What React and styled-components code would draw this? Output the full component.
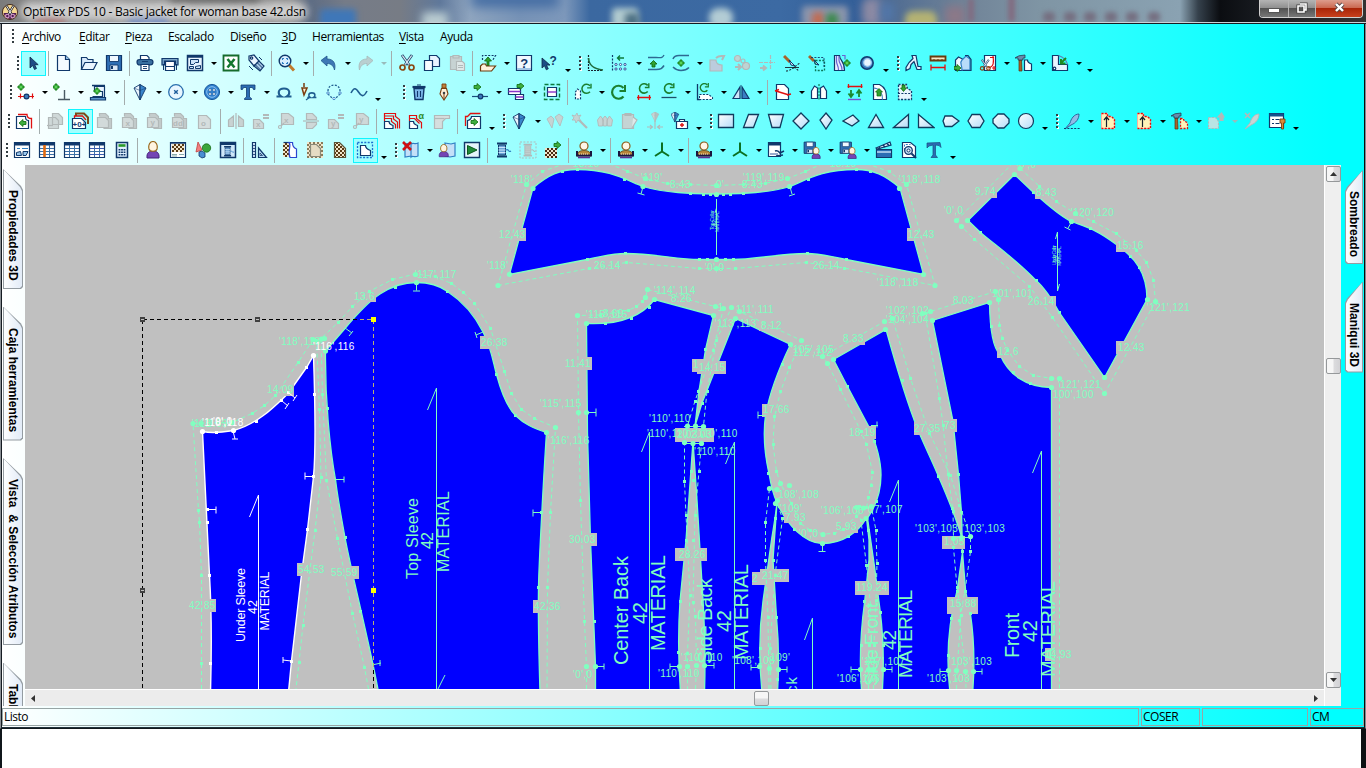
import React from 'react';
import styled, { createGlobalStyle, css } from 'styled-components';

const N = '#10386b';
const B = '#2f7fc4';
const L = '#d8eafc';
const R = '#e01010';
const GR = '#1f8a1f';
const G = '#b2b9b9';
const K = '#16202c';
const W = '#ffffff';
const BR = '#a8632a';
const M = '#80ffc0';

const Global = createGlobalStyle`
  * { box-sizing: border-box; }
  html, body { margin: 0; padding: 0; }
  body { width: 1366px; height: 768px; overflow: hidden; background: #fff; font-family: "Open Sans", "Noto Sans", sans-serif; }
`;

const Desktop = styled.div`
  width: 1366px;
  height: 768px;
  display: flex;
  flex-direction: column;
  background: #fff;
`;

/* ---------- title bar ---------- */
const TitleBar = styled.header`
  height: 24px;
  flex: none;
  display: flex;
  align-items: flex-start;
  position: relative;
  overflow: hidden;
  border-bottom: 1px solid #151b22;
  background: linear-gradient(90deg, #7b7b7b 0, #8f8f8f 60px, #8c8c8c 170px, #858585 290px, #5d6c84 310px, #767c88 345px, #777c85 400px, #5f789b 440px, #8fa5bf 470px, #7793b7 520px, #7d98bb 565px, #3b68a0 590px, #3c6aa3 780px, #345f98 860px, #4b6992 880px, #6f8297 960px, #7f95a4 1040px, #8aa2b2 1180px, #35414c 1198px, #0b0d11 1220px, #16191e 1255px, #333 1366px);
`;
const Blob = styled.i`
  position: absolute;
  left: ${p => p.$x}px;
  top: ${p => p.$y ?? 8}px;
  width: ${p => p.$w}px;
  height: ${p => p.$h ?? 20}px;
  background: ${p => p.$c};
  border-radius: ${p => p.$r ?? 4}px;
  filter: blur(${p => p.$b ?? 3}px);
`;
const TitleEdge = styled.i`
  position: absolute;
  left: 0;
  right: 0;
  top: 22px;
  height: 1px;
  background: #c9d2d8;
`;
const TitleText = styled.h1`
  position: relative;
  margin: 3px 0 0 5px;
  font-size: 12px;
  line-height: 17px;
  font-weight: 400;
  letter-spacing: -0.24px;
  color: #000;
  white-space: pre;
  text-shadow: 0 0 6px #e8e8e8, 0 0 8px #e0e0e0, 0 0 10px #ddd;
`;
const AppIcon = styled.span`
  position: relative;
  display: flex;
  margin: 4px 0 0 2px;
`;
const WindowButtons = styled.div`
  position: relative;
  display: flex;
  margin-left: auto;
  margin-right: 3px;
  height: 18px;
  border: 1px solid #d0d0d0;
  border-top: 0;
  border-radius: 0 0 4px 4px;
  overflow: hidden;
`;
const WindowButton = styled.button`
  width: ${p => p.$w}px;
  border: 0;
  padding: 0 0 2px;
  display: flex;
  align-items: center;
  justify-content: center;
  border-left: ${p => (p.$first ? 0 : '1px solid #b5b5b5')};
  background: ${p => (p.$close
    ? 'linear-gradient(#dd9d8d 0, #cb6a52 45%, #a92508 50%, #c8401c 100%)'
    : 'linear-gradient(#b4b4b4 0, #909090 45%, #535353 50%, #777 100%)')};
`;

/* ---------- frame ---------- */
const Frame = styled.div`
  height: 705px;
  flex: none;
  display: flex;
  flex-direction: column;
  border-left: 1px solid #8a8f94;
  border-right: 1px solid #7d8b90;
  border-bottom: 1px solid #10181c;
`;
const Body = styled.div`
  flex: 1;
  display: flex;
  flex-direction: column;
  border-left: 1px solid #151b22;
  border-right: 1px solid #0b0b0b;
  border-bottom: 1px solid #20303a;
  background: linear-gradient(90deg, #fff 0, #f2ffff 60px, #00ffff 1330px);
`;
const MenuBar = styled.nav`
  height: 25px;
  flex: none;
  display: flex;
  align-items: center;
  padding: 0 0 0 5px;
`;
const MenuItem = styled.span`
  width: ${p => p.$w}px;
  font-size: 12px;
  line-height: 16px;
  letter-spacing: -0.42px;
  color: #000;
  white-space: nowrap;
  u { text-underline-offset: 2px; }
`;
const Toolbars = styled.div`
  height: 116px;
  flex: none;
`;
const ToolRow = styled.div`
  height: 29px;
  display: flex;
  align-items: center;
  margin-left: ${p => p.$pad}px;
`;
const Grip = styled.i`
  width: 9px;
  height: 15px;
  margin-left: ${p => p.$gap || 0}px;
  flex: none;
  background: repeating-linear-gradient(#333d42 0 2px, transparent 2px 4px) 5px 0 / 2px 15px no-repeat,
    repeating-linear-gradient(#fff 0 2px, transparent 2px 4px) 6px 1px / 2px 15px no-repeat;
`;
const Tool = styled.button`
  width: 25px;
  height: 25px;
  flex: none;
  padding: 2px;
  display: flex;
  align-items: flex-start;
  justify-content: flex-start;
  background: transparent;
  border: 1px solid transparent;
  ${p => p.$on && css`background: #a2ffff; border-color: #0ff5ff;`}
`;
const Arrow = styled.i`
  width: 11px;
  height: 25px;
  flex: none;
  display: flex;
  align-items: center;
  justify-content: center;
  &::after {
    content: '';
    border: 3px solid transparent;
    border-bottom: 0;
    border-top-color: ${p => (p.$off ? '#9bb' : '#000')};
  }
`;
const Overflow = styled(Arrow)`
  width: 12px;
  padding-top: 14px;
`;
const Sep = styled.i`
  width: 1px;
  height: 25px;
  margin: 0 3px 0 2px;
  flex: none;
  background: #a4adad;
`;

/* ---------- workspace ---------- */
const Work = styled.main`
  height: 541px;
  flex: none;
  display: flex;
`;
const SideTabs = styled.aside`
  width: ${p => p.$w}px;
  flex: none;
  overflow: hidden;
  padding-top: ${p => p.$top}px;
  padding-left: ${p => p.$left}px;
  display: flex;
  flex-direction: column;
  gap: 17.5px;
`;
const SideTab = styled.div`
  width: ${p => (p.$right ? 18 : 20)}px;
  height: ${p => p.$h}px;
  flex: none;
  padding: 1px;
  background: #949ca2;
  --shape: ${p => (p.$right
    ? 'polygon(100% 0, 2px 17px, 0 21px, 0 calc(100% - 2px), 2px 100%, 100% 100%)'
    : 'polygon(0 0, calc(100% - 2px) 17px, 100% 21px, 100% calc(100% - 2px), calc(100% - 2px) 100%, 0 100%)')};
  clip-path: var(--shape);
`;
const SideTabFace = styled.div`
  width: 100%;
  height: 100%;
  overflow: hidden;
  padding-top: 20px;
  clip-path: var(--shape);
  background: linear-gradient(90deg, #fdfeff, #e2ebf7);
  writing-mode: vertical-rl;
  display: flex;
  align-items: center;
  justify-content: flex-start;
  font: bold 12px/16px "Liberation Sans", Arial, sans-serif;
  color: #000;
  white-space: pre;
`;
const Center = styled.section`
  width: 1299px;
  flex: none;
  display: flex;
  flex-direction: column;
`;
const Canvas = styled.svg`
  display: block;
  width: 1299px;
  height: 524px;
  background: #c0c0c0;
`;
const VScroll = styled.div`
  width: 17px;
  height: 541px;
  flex: none;
  display: flex;
  flex-direction: column;
  align-items: center;
  padding: 1px 0 18px 1px;
  border-left: 1px solid #fff;
  background: #efefef;
`;
const HScroll = styled.div`
  height: 17px;
  display: flex;
  align-items: center;
  padding: 0 6px 0 6px;
  border-top: 1px solid #fff;
  background: #ececec;
`;
const Thumb = styled.button`
  width: 15px;
  height: ${p => (p.$flat ? 15 : 16)}px;
  flex: none;
  padding: 0;
  display: flex;
  align-items: center;
  justify-content: center;
  border: 1px solid #95989a;
  border-radius: 2px;
  background: linear-gradient(${p => (p.$flat ? '180deg' : '90deg')}, #f6f6f6 0 48%, #dcdcde 52%, #d2d2d5);
  margin: ${p => p.$m || 0};
`;
const ArrowSvg = styled.svg`
  display: block;
  flex: none;
  margin: ${p => p.$m || 0};
`;
const Status = styled.footer`
  flex: 1;
  display: flex;
  gap: 2px;
  padding: 2px 0 1px;
`;
const Pane = styled.div`
  width: ${p => p.$w}px;
  height: 18px;
  flex: none;
  padding-left: 1px;
  border: 1px solid #98a5a5;
  font-size: 12px;
  line-height: 16px;
  letter-spacing: -0.5px;
  color: #000;
`;
const Below = styled.div`
  flex: 1;
  background: #fff;
  border-left: 2px solid #10161b;
  border-right: 5px solid #0d1012;
`;

/* ---------- icon drawing helpers ---------- */
const p = (d, f = 'none', s = N, w = 1.2, x = {}) => <path key={d} d={d} fill={f} stroke={s} strokeWidth={w} {...x} />;
const c = (cx, cy, r, f = 'none', s = N, w = 1.2) => <circle key={`${cx}-${cy}-${r}`} cx={cx} cy={cy} r={r} fill={f} stroke={s} strokeWidth={w} />;
const dash = { strokeDasharray: '2 1.4' };
const greenArrow = (x, y) => p(`M${x} ${y + 1.5}h3v-2l4 3.5-4 3.5v-2h-3z`, '#3fae3f', '#0d6b0d', 0.8);
const plus = (x, y) => p(`M${x + 2} ${y}h2v2h2v2h-2v2h-2v-2h-2v-2h2z`, '#5ad35a', '#0b750b', 0.9);
const txt = (s, x, y, size = 8, fill = G) => (
  <text key={s} x={x} y={y} fontSize={size} fontWeight="bold" fill={fill} fontFamily="Liberation Sans, sans-serif">{s}</text>
);
const kite = (a = '#eaf5ff', b = '#3a86cc', s = N) => [
  p('M9 1.500 3 5 9 17z', a, s, 0.9), p('M9 1.500l6 3.500L9 17z', b, s, 0.9), p('M3 5l6 2.500L15 5M9 1.500v15', 'none', s, 0.5),
];
const person = (x = 0, y = 0, k = 1) => (
  <g key="person" transform={`translate(${x} ${y}) scale(${k})`}>
    {p('M3 17c-.5-5 2-7 6-7s6.500 2 6 7z', '#7444b4', '#40207a', 1)}
    {p('M5 8c-1-4 1-7.500 4-7.500S14 4 13 8c-1 3-7 3-8 0z', '#fff4e0', '#9a6a20', 1.2)}
  </g>
);
const bust = [
  p('M2 15c0-4 3-5.500 7-5.500s7 1.500 7 5.500z', '#b8863a', '#6b4410', 0.8),
  c(9, 5, 4, '#fff6e6', '#8a5a18', 1.2),
  p('M2 10v4.500h14V10', 'none', '#1a1640', 2), p('M3 16.500h12', 'none', '#5d2f96', 1.600), p('M4 13h10', 'none', '#f0e6c0', 1, { strokeDasharray: '1 1' }),
];
const hammer = (x = 0) => [
  p(`M${4 + x} 6l2.500 0 .5 11h-3z`, BR, '#5c2e0c', 0.7), p(`M${x} 4q3-3 10-3v3H${x + 8}v2H${x + 3}V4z`, '#6a8cac', '#1b3148', 0.7),
];
const curl = (x = 0, y = 0, k = 1) => <g key="curl" transform={`translate(${x} ${y}) scale(${k})`}>{p('M13.500 12.500a6.500 6.500 0 1 1 0-8.500', 'none', '#1b8030', 2.200)}{p('M15 1v6H9.500', 'none', '#1b8030', 2)}</g>;
const grid = h => [p('M1.500 1.500h15v15h-15z', W), p('M1.500 3h15', 'none', N, 3), p('M2 7.500h14M2 10.500h14M2 13.500h14M6.500 4v12M11.500 4v12', 'none', '#3b70a5', 1), h];
const checker = (x, y, w, h, fill = '#5a3a14') => {
  const a = [<rect key="bg" x={x} y={y} width={w} height={h} fill="#f2e6cc" />];
  for (let i = 0; i < w / 2; i++) for (let j = 0; j < h / 2; j++) if ((i + j) % 2) a.push(<rect key={`${i},${j}`} x={x + i * 2} y={y + j * 2} width="2" height="2" fill={fill} />);
  return a;
};
const spool = (s = N, f = '#6da6d8') => [
  p('M3 2.500h10M3 15.500h10', 'none', s, 2.200), p('M4.500 4h7v10h-7z', f, s, 1), p('M4.500 6.500h7M4.500 9h7M4.500 11.500h7', 'none', s === G ? s : '#d8ecff', 0.9), p('M12 9c3-2 2 3 5 1', 'none', s === G ? s : B, 1.200),
];
const tri = p('M9 1.500v9M9 10.500l-7 4.500M9 10.500l7 4.500', 'none', '#0c7022', 2);
const disk = (k = 1) => <g key="disk" transform={`scale(${k})`}>{p('M1.500 1.500h15v15h-15z', '#2f6fb5')}{p('M4.500 1.500h9v6h-9z', '#f0f8ff', N, 0.9)}{p('M5 11h8v5.500H5z', '#dce9f7', N, 0.9)}{p('M7 12v3', 'none', N, 2)}</g>;
const scissors = [
  p('M4 1l7 10M14 1 7 11', 'none', '#2b4b70', 2.800), p('M4.300 1.500l6.500 9M13.700 1.500l-6.500 9', 'none', '#e8f2fb', 1.200),
  c(4.500, 13.500, 2.500, 'none', '#8a4712', 1.700), c(13.500, 13.500, 2.500, 'none', '#8a4712', 1.700),
];
const pen = s => p('M16 2c-5 0-8 5-9 9l-5 6 6-4c5-2 8-6 8-11z', s === G ? '#c8d4d4' : '#8fbbe6', s, 0.9);
const gp = (...parts) => [p('M3.500 4.500V1.500h6l3 3v2h3v10h-8', '#c4cccc', G), p('M1.500 5.500h8l3 3v7h-11z', '#d2dada', G), ...parts];
const dashedPiece = (f = '#fff2b8') => [p('M2.500 1.500h6v3h4l3 3v9h-13z', f, '#f7b0a0', 1), p('M2.500 1.500h6v3h4l3 3v9h-13', 'none', R, 1.400, dash)];
const shape = d => p(d, 'url(#shapeFill)', '#103a5c', 1.300);
const sub = (x, y, k, s) => <g key={`u${x}`} transform={`translate(${x} ${y}) scale(${k})`}>{s}</g>;

const ICONS = {
  arrow: [p('M6 3v11l2.700-2.500 1.800 4 2-1-1.800-3.800h3.500z', '#1c4d86', '#0c2748', 0.8)],
  new: [p('M2.500 1.500h8l4 4v11h-12z', '#f4faff'), p('M10.500 1.500v4h4', '#9cc8ee')],
  open: [p('M1.500 15.500v-12h5l1.500 2h5v3', L), p('M1.500 15.500l3.500-7h12l-3.500 7z', '#eaf5ff')],
  save: disk(1),
  print: [p('M4.500 5v-3.500h6.500l2 2V7', W), p('M1 8c0-2 1-2.500 3-2.500h10c2 0 3 .5 3 2.500s-1 3-3 3H4c-2 0-3-1-3-3z', '#396f9f'), p('M5 10.500h8v6H5z', W), p('M7 12.500h4M7 14.500h4M6 7.500h6', 'none', N, 0.9)],
  plotter: [p('M1 11V4.500h16V11h-2.500V7h-11v4z', '#7ba6ca'), p('M4.500 7.500h9v9h-9z', W), p('M5 12.500h8M2.500 10v6M15.500 10v6', 'none', N, 1)],
  layout: [p('M1.500 1.500h15v15h-15z', '#e8f4ff', N, 1.500), p('M1.500 2.500h15', 'none', N, 2.500), p('M4.500 5.500h8v3h-3l-2 2h-3zM3.500 12.500h4v2h-4zM9.500 12.500l5-1v3h-5z', '#cfe4f7', N, 1)],
  excel: [p('M1.500 1.500h15v15h-15z', W, '#156b2c', 1.800), p('M5.500 5l7 8.500M12.500 5l-7 8.500', 'none', '#14772e', 2.600)],
  tag: [p('M2 2l5-1 5 6-5 5-5-6z', '#eaf4ff'), c(4.500, 4, 1.200, W), p('M7 12l5-5 5 5-4 5z', '#a9c9e6'), p('M8 10.500l5.500 5.500M10 8.500l5.500 5.500M2 12l4 4M12 3l3 3', 'none', N, 1)],
  zoom: [p('M11 11l5 5.500', 'none', '#c07a2c', 3), c(7, 7, 5.800, '#d9efff', N, 1.400), p('M4.500 6v-1.500h1.500M8 4.500h1.500V6M9.500 8v1.500H8M6 9.500H4.500V8', 'none', B, 1.100)],
  undo: [p('M1 6.500L7 2v3c7 0 9 5 7.500 11-1-4-3-6.500-7.500-6.500V12z', '#3d78b5', '#20568c', 0.8)],
  redo: [p('M17 6.500L11 2v3C4 5 2 10 3.500 16c1-4 3-6.500 7.500-6.500V12z', '#b9cfd0', '#a7b9b9', 0.8)],
  scissors,
  copy: [p('M6.500 1.500h7l3 3v8h-10z', '#e9f4ff'), p('M1.500 6.500h8v10h-8z', '#f8fcff')],
  paste: [p('M2.500 2.500h11v13h-11z', '#c7d3d3', G), p('M5 1.500h6v2.500H5z', '#c7d3d3', G), p('M8.500 7.500h6l2 2v7h-8z', '#dfe9e9', G), p('M10 11.500h5M10 13.500h5', 'none', G)],
  import: [p('M3.500 6V1.500h13l-3 5', 'none', N, 1.200, dash), p('M8 12V7H5.500L9 3l3.500 4H10v5z', '#2fa02f', '#0b650b', 0.8), p('M1.500 17v-5l2-2h3l1 2h9l-4 5z', '#fff2dc', '#6b3a0c')],
  help: [p('M1.500 1.500h15v15h-15z', '#f0f8ff'), p('M2 15h14', 'none', '#9fc4e6', 2), txt('?', 5.300, 14, 13, N)],
  phelp: [p('M2 4v10l2.500-2.200 1.800 4 2-1-1.800-3.700H10z', '#1c4d86', '#0c2748', 0.8), txt('?', 9.500, 11, 12, N)],
  curve: [p('M2.500 1v15.500H17', 'none', K, 1.200, { strokeDasharray: '2 1' }), p('M2.500 4C3 12 8 15 17 16', 'none', '#1e6a3c', 1.600)],
  dots: [p('M1.500 1v16', 'none', N, 1.200, dash), p('M13 4H7M9 1.500L6.500 4 9 6.500', 'none', '#0d7a3a', 1.400), ...[5, 9.5, 14].flatMap(x => [10.5, 15].map(y => c(x, y, 1.100, W, '#33519b', 1)))],
  upcurve: [p('M1 3.500h8c5 0 6 1 8-2.500', 'none', '#2e6a92', 1.400), p('M1 15.500h8c5 0 6-1 8-4', 'none', '#2e6a92', 1.600), p('M5 13V10H3l3.500-3.500L10 10H8v3z', '#2fa02f', '#0b650b', 0.8)],
  pluscurve: [p('M1 5c1-3 3-3.500 6-3.500h10M1 13c3 3 5 3.500 8 3.500s6-1 8-3', 'none', '#2e6a92', 1.500), plus(6, 6)],
  ga: [p('M2 6h6c0 4 2 5 6 5v6H2z', '#bcd', G), p('M8 4c3-3 6-2 8-2l-2 4', 'none', G, 2)],
  gb: [c(4.5, 4.5, 3, '#bed3d3', G), c(13, 12, 3.5, '#bed3d3', G), p('M2 13h5M5 10l3 3-3 3', 'none', G, 2), c(10, 7, 2, 'none', G)],
  gc: [p('M1 8.500h16M12.500 1v15', 'none', G, 1.200, { strokeDasharray: '4 1' }), p('M2 14h5M5 11.500l3 2.500-3 2.500', 'none', G, 2)],
  brush: [p('M1 2l6 6', 'none', BR, 3), p('M6 6l6 6-4-1z', '#d9ecf8', N, 1), p('M3 17c5 0 9-5 14-8M11 13l5 4', 'none', K, 1.100, dash), p('M2 13.500h14', 'none', K, 0.9)],
  brush2: [p('M1 2l5 5', 'none', BR, 3), p('M6 6l5 5-4-1z', '#d9ecf8', N, 1), p('M7.500 6.500h9v10h-9z', 'none', '#0a7a5a', 1.300, dash), p('M3 3.500h13v10', 'none', N, 0.9, dash)],
  waves: [p('M1.500 1.500h5c0 5 5 5 5 15h-10z', '#e8eeff', N, 1.200), p('M3.500 2v5c0 4 2 4 2 9M6 2v4c0 4 3 4 3 10M9 1.500h3v4', 'none', '#6a64d0', 1.200), plus(11, 6)],
  ring: [c(9, 9, 6.200, '#3f7ec0', '#123c72', 1.500), c(9.500, 8.500, 3.800, '#eaf6ff', '#9fcaf0', 1.200)],
  compass: [p('M8 1.500h4l2 11h3v3h-4l-3-8-3 3-1 4-4 2v-3l3-5 4-4z', '#e6f4ff', N, 1.200)],
  ruler: [p('M1.500 2.500h15v4h-15z', '#f5e9c8', '#6b3a0c', 1.800), p('M5 5v2M9 5v2M13 5v2', 'none', '#6b3a0c', 1), p('M1.500 13.500h15M2 10.500v6M16 10.500v6', 'none', R, 1.300)],
  compare: [p('M1.500 16.500V6l3-3 4 2v11.500z', '#f1f8ff'), p('M8 16c0-6-3-7 0-10l4-4 4 3v11z', '#b9dcfa', B), p('M11 1.500h3l3 4v11h-8', 'none', N), greenArrow(0, 11)],
  scispiece: [p('M5.500 1.500h11v15h-11z', W), p('M9 14c6-1 6-6 5-12M11 3.500h4M13 14h4M15 12v4', 'none', R, 1.200), sub(0, 5, 0.7, scissors)],
  hammer: [...hammer(0), p('M9.500 6v10.500h7V10c-3-1-4-2-4-4z', W)],
  corner: [p('M1.500 1.500h6v9h9v6h-15z', '#e9f4ff'), p('M7.500 1.500c6 2 8 5 9 9', 'none', '#5c86b6', 1.300), p('M15 4l-5 5M10 5v4.500h4.500', 'none', GR, 2), c(3.500, 14.500, 1.300, W)],

  addpt: [p('M1 13.500h16M3.500 10.500v5M15.500 10.500v5', 'none', R, 1.200), c(9.5, 13.5, 2.400, '#3b79ba', N), plus(1, 1)],
  addperp: [p('M5 16.500h12M11.500 16V7', 'none', '#4a5a63', 1.400), plus(0, 1)],
  sewing: [p('M3.500 13.500h10V8.500h-8v-5h10v12', '#eaf4ff'), p('M1.500 14.500h15v2.500h-15z', '#5c96cc'), p('M3 2.500h13', 'none', N, 1.500), plus(5, 5)],
  kite: kite(),
  circlex: [c(9, 9, 7.300, '#e8f6ff', '#2a6fae', 1.300), p('M7.200 7.200l3.600 3.600M10.800 7.200l-3.600 3.600', 'none', '#1f5d9c', 1.400)],
  button: [c(9, 9, 7.600, '#2e7fce', '#1b5a9c', 1), c(9, 9, 5.300, 'none', '#9acbf4', 0.9), ...[7, 11].flatMap(x => [7, 11].map(y => c(x, y, 1.300, W, '#174f8a', 0.5)))],
  T: [p('M2 2h14v4.500h-1.500L13.500 4.500h-3V14l2 1.500v1h-7v-1l2-1.500V4.500h-3L3.500 6.500H2z', '#2b6cb3', '#123c72', 0.8)],
  omega: [p('M1.500 13.500h5C2 11 3 5.500 9 5.500s7 5.500 2.500 8h5', 'none', '#1f5d90', 2)],
  penomega: [p('M4 0v4M2 5l2 7 3-7z', '#fff0d8', '#7a3e10', 1.500), sub(6, 6, 0.65, [p('M2 13h4.500C3 11 3.500 6 9 6s6 5 2.500 7H16', 'none', '#1f5d90', 2.400)]), p('M6 17l4-3', 'none', '#1f5d90', 1.200)],
  arc: [p('M3 8c0-8 12-8 12 0M3 11l4 4M15 11l-4 4', 'none', '#1f5d90', 1.300, dash), c(3, 10, 1.200, W, B, 0.9), c(15, 10, 1.200, W, B, 0.9), c(9, 15.500, 1.200, W, B, 0.9)],
  sine: [p('M1 10c3-6 5-5 7.500-1s5 6 8.500-1', 'none', '#1f5d90', 1.600)],
  trash: [p('M4 5.500h10l-1 11H5z', '#7db8ea', N, 1.400), p('M2.500 4h13', 'none', N, 2.200), p('M7 2h4M7.500 8v6M10.500 8v6', 'none', N, 1.100)],
  nib: [p('M7 1h4v4H7z', '#c0813a', '#7a3e10', 0.9), p('M6.500 5.500h5L13 11l-4 6-4-6z', '#fff0d8', '#7a3e10', 1.100), p('M9 16v-5', 'none', '#7a3e10', 1), c(9, 10, 1, K, K, 0.4)],
  movept: [p('M1 13.500h16', 'none', '#1b4d7c', 1.200), c(9.5, 13.500, 2.300, '#3b79ba', N), greenArrow(3, 1)],
  moveseg: [p('M1.500 5.500h12v6h-12z', W), p('M8.500 11.500h8v5h-8z', W), p('M1.500 8.500h12M8.500 14h8', 'none', '#8a32c8', 1.300), greenArrow(10, 0)],
  selseg: [p('M1.500 1.500h15v15h-15z', 'none', '#0b7a3c', 1.400, { strokeDasharray: '4 2' }), p('M4.500 4.500h9v9h-9z', W), p('M4.500 9h9', 'none', '#8a32c8', 1.400)],
  rotpiece: [p('M1.500 16V9l2-3 3 2v8z', W, N, 1.200, dash), curl(6.5, 0, 0.7)],
  rotate: [curl(0, 1, 1)],
  rotred: [curl(3, -0.5, 0.72), p('M2 14.500h14M3.500 12v5M14.500 12v5', 'none', R, 1.300)],
  rotline: [curl(3, -0.5, 0.72), p('M1.500 14.500h15', 'none', '#1f4e68', 1.300)],
  rotcorner: [p('M1.500 1v15.500h3', 'none', N, 1.300), p('M3.500 11.500h9l4 3v2h-13z', W, N, 1.100, dash), curl(3, -0.5, 0.62)],
  mirror: [p('M8 4v11.500H1z', '#cfe6fa'), p('M10 4v11.500h7z', '#3a7fc2')],
  cutpage: [p('M2.500 1.500h8l4 4v11h-12z', W), p('M1 8l4-1.500M13 12l4-1M2 8l13 4', 'none', R, 1.400)],
  vest: [p('M1.500 8l3-5 3 2v10.500h-6zM10.500 5l3-2 3 5v7.500h-6z', W), p('M9 1v16', 'none', '#0b8a5c', 1.300, dash)],
  swap: [p('M1.500 3.500h15M2.500 1v4M15.500 1v4', 'none', R, 1.300), p('M5 7v6M2.500 10.500L5 14l2.500-3.500M13 14V8M10.500 10.500L13 7l2.500 3.500', 'none', '#1b8a2e', 1.800), p('M2 16.500h13', 'none', '#7a52d0', 1.400)],
  pageup: [p('M2.500 1.500h6c6 3 7 7 7 15h-13z', W), p('M2.500 5c6 0 9 5 9 11.500', 'none', '#3f7fbf', 1.100), p('M6 13V9H4.500L8 5.500 11.500 9H10v4z', '#2fa02f', '#0b650b', 0.7)],
  pagedown: [p('M2.500 1.500h8c0 4 2 5 5 6v9h-13z', '#eaf6ff', N, 1.300, dash), p('M2 10.500h13', 'none', N, 1.100, dash), p('M6 2v3H4.500L7.500 8.500 10.500 5H9V2z', '#2fa02f', '#0b650b', 0.7)],

  pieceback: [p('M3 2.500h9c0 3 2 4 4.500 4v10', 'none', R, 1.300), p('M1.500 4.500h9c0 3 1 4 3 4v8h-12z', W), p('M11 9.500H8v-2L4 11l4 3.500v-2h3z', '#3fae3f', '#0d6b0d', 0.8)],
  g0: gp(), gx: gp(txt('x', 4.500, 13.500)), gy: gp(txt('y', 4.500, 13)), gdd: gp(txt('dd', 2, 14)), go: [p('M2.500 3.500h8l4 4v9h-12z', '#d6dede', G), txt('o', 5, 14)],
  gcopy: [p('M6.500 1.500h6l4 4v7h-10zM2.500 5.500h7l3 3v8h-10z', '#cfd8d8', G), p('M1 13.500h6', 'none', G)],
  zeropiece: [p('M5 4V1.500h8l4 4V12', 'none', '#7a4a18', 2), p('M3.500 6V4h8l3.500 4', 'none', R, 1.300), p('M1.500 6.500h9l4 4v6h-13z', W), txt('+0+', 1.500, 15, 8, '#123c72')],
  gmir: [p('M1.500 14.500V8l5-4v10.500zM16.500 14.500V8l-5-4v10.500z', '#c8d2d2', G), p('M9 1v16', 'none', G)],
  gxe: [p('M1.500 7.500h6l4 4v5h-10z', '#cfd8d8', G), txt('x', 4, 15), p('M11 3h6M11 6h6', 'none', G, 1.800)],
  gye: [p('M1.500 7.500h6l4 4v5h-10z', '#cfd8d8', G), txt('y', 4, 14), p('M11 3h6M11 6h6', 'none', G, 1.800)],
  gxp: [p('M4.500 1.500h7l5 4v7h-12z', '#cfd8d8', G), txt('x', 7, 10.500), c(3, 15, 1.500, 'none', G), p('M4 14l3-3', 'none', G)],
  gyp: [p('M4.500 1.500h7l5 4v7h-12z', '#cfd8d8', G), txt('y', 7, 9.500), c(3, 15, 1.500, 'none', G), p('M4 14l3-3', 'none', G)],
  ghor: [p('M4.500 1.500h6l4 4v2h-10zM4.500 16.500h6l4-4v-2h-10z', '#cfd8d8', G), p('M1 9h16', 'none', G)],
  redstack: [p('M1.500 3.500v-2h11v3l4 3v9M1.500 6.500V4h9v3l4 3v6.500M1.500 9V6.500h7v3l4 3v4', 'none', R, 1.200), p('M1.500 9.500h4.500c0 3 2 3 4 4v3h-8.500z', W)],
  redalpha: [p('M1.500 6.500v-3h7v3l5 4v6M1.500 9V6.500h5l5 5', 'none', R, 1.200), p('M1.500 9.500h4c0 3 2 3 4 4v3h-8z', W), txt('α', 10.500, 6.500, 9, '#2f8a2a')],
  gcorner: [p('M1.500 3.500h15v3h-4l-3 3v7h-8z', '#d6dede', G), p('M1.500 6.500h10', 'none', G)],
  pieceright: [p('M1.500 14V4.500h2l3-3h10', 'none', R, 1.300), p('M3.500 16.500V8.500c2 0 4-2 4-4h9v12z', W), greenArrow(7, 7)],
  gkites: [p('M1 7l4-3 3 3-2 9zM9 5l4-3 4 3-3 9z', '#c5d4d4', G, 0.8)],
  gwand: [p('M7 7l9 9', 'none', G, 2.200), p('M6 1l1 3 3-1-2 3 2 3-3-1-2 3-1-3-3 0 2-2-2-3 3 1z', '#c5d4d4', G, 0.8)],
  gkites3: [p('M1.500 8l3-4 3 4-1 6h-4zM6.500 7l2.500-3 2.500 3-1 7h-3zM11 8l2.500-4 3 4-1 6h-4z', '#c5d4d4', G, 0.9)],
  gclip: [p('M1.500 2.500h11v14h-11z', '#c5d4d4', G), p('M4 1.500h6v2H4z', G, G), p('M12 5l4 3-5 8', '#dfe9e9', G)],
  garrowkite: [sub(3.500, -1, 0.62, kite('#ccd8d8', '#b5c2c2', G)), p('M1 15h5M4 13l2.500 2L4 17M17 15h-5M14 13l-2.500 2 2.500 2M9 9v8', 'none', G, 1.100)],
  kitebox: [sub(-2, -1, 0.65, kite()), p('M5.500 9.500h11v7h-11zM8.500 9.500V7.500h5v2', W), p('M11 11v4M9 13h4', 'none', R, 1.400)],
  rect: shape('M1.500 2.500h15v13h-15z'), para: shape('M6.500 2.500h10L11.500 15.500h-10z'), trap: shape('M1.500 2.500h15L13 15.500H5z'), diamond: shape('M9 1l8 8-8 8-8-8z'),
  kiteo: shape('M9 1l6 7-6 9-6-9z'), flat: shape('M1 9l10-6 6 6-7 5z'), triangle: shape('M9 2.500L16.500 15.500h-15z'), rtri: shape('M16.500 2.500v13h-15z'), ltri: shape('M1.500 2.500L17 15.500H1.500z'),
  penta: shape('M3 4h7l7 5-7 5.500H3L1 9z'), hexa: shape('M5 2.500h8L17 9l-4 6.500H5L1 9z'), octa: shape('M6 2h6l5 5v4l-5 5H6L1 11V7z'), circ: c(9, 9, 7.500, 'url(#shapeFill)', '#103a5c', 1.200),
  pen: [pen('#255c94'), p('M1 16.500h16', 'none', N, 1.200, dash)],
  redpiece: [dashedPiece(), p('M7.500 15V5M5 8l2.500-3L10 8', 'none', K, 1.200)],
  hammerred: [...hammer(0), p('M9.500 6.500h3c0 2 1 3 4 4v6h-7z', '#fff2b8', R, 1.300, dash)],
  gpiece: [p('M1.500 5.500h7l3 4v7h-10z', '#b8e4e4', G, 1.100, dash), p('M13 9V5h-2l3.500-4L17 5h-1v4', G, G)],
  gpen: [pen(G), p('M2 1l5 5M7 1L2 6', 'none', G, 1.600)],
  listbrush: [p('M1.500 1.500h14v14h-14z', W), p('M1.500 3h14', 'none', '#14528e', 3), p('M4 7.500h2M4 11.500h2M7.500 7.500h4M7.500 11.500h4', 'none', N, 1.200), p('M12 7h5v4h-1.500v6h-2v-6H12z', '#d88a3a', '#7a3e10', 0.9)],

  t1: [p('M1.500 1.500h15v15h-15z', W), p('M1.500 3h15', 'none', N, 3), p('M4 7.500h3M9 7.500h6', 'none', B, 1), p('M3.500 14.500v-3l4-1 1 4zM10 10.500h5l-2 4h-3z', '#9ac6ec', N, 1)],
  t2: grid(p('M6.500 4v12', 'none', '#e06a10', 2.600)), t3: grid(null), t4: grid(p('M2 7.500h14M2 13.500h14', 'none', '#3a5cae', 1.200)),
  calc: [p('M3.500 1.500h11v15h-11z', '#dff0ff', N, 1.500), p('M5.500 4.500h7', 'none', '#2a9a2a', 2.600), p('M6.500 8v7M9 8v7M11.500 8v7', 'none', N, 1.800, { strokeDasharray: '1.5 1' })],
  person: person(),
  checkwin: [p('M1.500 1.500h15v15h-15z', W), ...checker(3, 3, 12, 8), p('M1.500 2h15', 'none', N, 1.500), p('M3 13.500h5M10 13.500h5M3 15h5', 'none', '#8aa', 1.200)],
  solids: [p('M4 1l4 8-6 2z', '#f08080', '#c04040', 0.8), c(12.5, 7, 4.200, '#3aa53a', '#176b17', 0.8), p('M5 11l3-1 3 2v4l-3 1-3-2z', '#4a8ed2', N, 0.8)],
  spoolwin: [p('M1.500 1.500h15v15h-15z', '#cfe8fa', N, 1.500), p('M1.500 3h15', 'none', N, 2), sub(3, 4, 0.7, spool())],
  setsquare: [p('M2.500 1.500h3v15h-3z', '#dcefff'), p('M8.500 7l8 9.500h-8z', '#b9dcf8'), p('M3 4.500h2M3 7.500h2M3 10.500h2M3 13.500h2', 'none', N, 0.8), p('M10 12l2.500 2.500H10z', W, N, 0.8)],
  chk1: [...checker(2, 2, 8, 14), p('M2.500 1.500h7', 'none', N), p('M8 1.500c3 3-2 8 1 15h6.500V8c-3-1-4-3-4-6.500z', W, '#2c46d0', 1.200)],
  chk2: [...checker(1, 1, 16, 16, '#8a7a5a'), p('M4.500 3.500h6l4 4v8h-10z', '#e6dcc4', '#8a8a7a')],
  chk3: [<g key="c" clipPath="url(#sheetClip)">{checker(3, 1, 12, 16)}</g>, p('M3.500 1.500h5l2 2 4 4v9h-11z', 'none', '#5a5236')],
  chk4: [p('M1.500 1.500h15v15h-15z', 'none', '#1b6fd0', 1.300, dash), p('M4.500 4.500h5c0 3 2 4 5 5v5h-10z', W)],
  xcloth: [p('M3 3l6-1v13l-6 1zM9 3c3-2 3 1 7-1v13c-4 2-5-1-7 1z', '#c4e0f8', B), p('M1 1l8 8M9 1L1 9', 'none', '#cf1010', 2.600)],
  personcloth: [p('M7 2l6 1 4-1v13l-5 1-5-1z', '#c4e0f8', B), person(-1, 3, 0.75)],
  play: [p('M1.500 1.500h15v15h-15z', '#e4f4fc', N, 1.400), p('M4.500 4.500L14 9l-9.500 4.500z', '#1f8a3a', '#0b5a1c', 1)],
  spool: spool(),
  gspool: [p('M1 1h16v16H1z', 'none', G, 1, dash), sub(2, 1.5, 0.85, spool(G, '#c3d0d0'))],
  chkarrow: [...checker(1, 7, 12, 10, '#4a2810'), greenArrow(10, 1)],
  bust, tri,
  winwrench: [p('M1.500 1.500h12v14h-12z', W), p('M1.500 3h12', 'none', N, 3), p('M3 13h8', 'none', '#9ac', 2), p('M8 10c3-1 4 1 5 2l4-2M9 15l7-1', 'none', N, 1.600)],
  diskperson: [disk(0.75), person(7, 6, 0.68)],
  clapper: [p('M1.500 8.500h15v8h-15z', '#2b6cb3'), p('M1 7L15 1l1 3L2 8z', '#eaf6ff'), p('M4 6l1 2M8 4l2 2M12 2.500l2 2', 'none', N, 1.500), p('M2 11h14', 'none', '#cfe6fa', 1.400)],
  magpiece: [p('M2.500 1.500h8l5 4v11h-13z', W), p('M4.500 9V3.500h6', 'none', B, 1, dash), c(8.5, 9.5, 3.800, '#cfe6fa', N, 1.300), c(8.5, 9.5, 1.500, W, N, 1), p('M11.500 12.500l4.500 4.500', 'none', N, 2)],
  T2: [p('M2 2l13-.5 1 5-2-2-3.500-.5V14l2 2.500H6L8 14V4L4 5 2 7z', '#2b6cb3', '#174a80', 0.7)],
};

function Icon({ name }) {
  return <svg width="18" height="18" viewBox="0 0 18 18">{ICONS[name]}</svg>;
}

/* "|" separator, "v" drop-down arrow, "vg" disabled arrow, "o" overflow, ":" grip, "_" grip of a detached bar, "*name" active tool */
const ROWS = [
  [10, ': *arrow | new open save | print plotter layout v excel tag | zoom v | undo v redo vg | scissors copy paste | import v help phelp o : curve dots v upcurve pluscurve v ga gb gc brush brush2 waves ring o : compass ruler compare scispiece v hammer v corner v o'],
  [3, ': addpt v addperp v sewing v | kite v circlex v button v T v omega penomega arc sine o _ trash nib v movept v moveseg v selseg | rotpiece v rotate rotred rotline v rotcorner v mirror v | cutpage v vest v swap pageup pagedown o'],
  [1, ': pieceback | gcopy *zeropiece g0 gx gy gdd go | gmir gxe gxp ghor gye gyp | redstack redalpha gcorner | pieceright o : kite v gkites gwand gkites3 gclip garrowkite kitebox o : rect para trap diamond kiteo flat triangle rtri ltri penta hexa octa circ o : pen v redpiece v redpiece v hammerred v gpiece vg gpen listbrush o'],
  [-1, ': t1 t2 t3 t4 calc | person checkwin solids spoolwin | setsquare | chk1 chk2 chk3 *chk4 o : xcloth v personcloth play | spool gspool chkarrow | bust v | bust v tri v | bust v tri v winwrench v diskperson v diskperson v clapper magpiece T2 o'],
];

function Toolbar({ pad, spec }) {
  return (
    <ToolRow $pad={pad}>
      {spec.split(' ').map((t, i) => {
        if (t === '|') return <Sep key={i} />;
        if (t === 'v' || t === 'vg') return <Arrow key={i} $off={t === 'vg'} />;
        if (t === 'o') return <Overflow key={i} />;
        if (t === ':') return <Grip key={i} />;
        if (t === '_') return <Grip key={i} $gap={14} />;
        const on = t[0] === '*';
        return <Tool key={i} $on={on}><Icon name={on ? t.slice(1) : t} /></Tool>;
      })}
    </ToolRow>
  );
}

/* ---------- pattern pieces ---------- */
const PIECES = [
  'M509.500 274.300L533 188C548 175 560 169.500 577 169.500C610 169.500 624 179 643 186.500C665 193 690 193.500 716.500 194C745 193.500 768 193 790 186.500C808 179 823 169.500 856 169.500C873 169.500 885 175 900 188L923.500 274.300L846 259.500C830 256 815 253.500 807 253.500C780 253.500 755 259.500 733 259.500H699C678 259.500 653 253.500 625.500 253.500C617 253.500 600 256.500 587 259.500Z',
  'M1014.500 174.500L1033 192C1047 204 1058 215 1071.500 221.500C1083 226 1095 228 1117 245C1135 258 1147 272 1147 299.500L1104.500 377.500L1059 312C1053 300 1042 285 1036 280.500C1018 261 995 245 980.500 232.500L968 220.500Z',
  'M325.500 351L345 328.500C358 313 368 302 380 294C392 286 405 282.500 416.500 282.500C430 282.500 440 286 447.500 291.500C468 305 477 320 483 332C492 350 493 362 496.500 374.500C502 395 508 408 515.500 415.500C524 424 533 428 546.500 432.500C544 470 539 560 538.500 587C538 620 539 660 540 692H378.500C370 645 352 575 345 537.500C341 515 338 500 335.500 479.500C330 450 325 400 325.500 351Z',
  'M586.500 323.500C620 325 642 316 654.500 299.500L713.500 315.500L705.500 349.500L699 391L695 426L693 441L686 540L680 601Q677 645 680.500 692H595.500V666L590.500 540L587.500 433Z',
  'M735.500 318.500L790.500 344.500C782 362 770 390 765.500 415.500C762 440 766 460 769 473.500Q772 492 777 503C775 520 773 530 771.500 540L763 601Q757 645 762 692H704.500Q706 650 703 600L697 500L693 441L695 426L702 403Z',
  'M777 503C787 525 805 543.500 822.500 543.500C842 543.500 858 533 866.500 518L869 540V560L864.700 601Q858 650 861.700 692H777.500Q780 655 776.500 617L773 560Z',
  'M833.500 359.500L886 329.500C895 362 908 405 918 430C925 447 934 465 938.500 476.500C947 496 955 515 961 535L962.500 552L957 591C948 625 946 660 950 692H882.300Q885 650 880.300 612L874.300 565L867.500 518C876 506 881 491 881 475C881 458 875 441 869 427C861 412 854 399 847.500 386.500Z',
  'M932.500 320.500L989.500 302.500C990 335 995 350 1000 354.500C1008 374 1025 387 1051.500 387.500V692H972.700Q976 650 970.300 613L965.700 591.700L962.500 552L961.500 512.500L958.500 474.500L953 421Z',
];
const SLEEVE = 'M202.500 431.500C215 434 230 431 233.500 430.500C258 424 275 406 288.500 393L306.500 367.500L313.500 355.500C315 400 316 450 313.500 476.500L307.500 529.500L302 570L291.500 661L288.500 692H210.500C212 640 211 600 209.500 575.500Z';

const SEAMS = [
  '498,285.500 589,268.500 626.500,262.500 699,268.500 735,268.500 806,262.500 844,268 935,285.500 906.500,184.500 889,171.500 862,162 830,160 805.500,171.500 787.500,178.500 765,183.500 743,184.500 717,185.500 690,184.500 667,183.500 645.500,178.500 627,171 600,160 570,162 542,171.500 526.500,184.500 498,285.500',
  '956.500,220.500 1014,162 1020,168 1039.500,186.500 1056,201.500 1075,213 1093,221.500 1116,233.500 1136.500,250.500 1146.500,262.500 1153.500,280 1155.500,301.500 1104.500,393.500 1052.500,317.500 1029.500,286.500 974.500,239.500 961.500,226.500 956.500,220.500',
  '201.500,689 201.500,663 201.500,575.500 199.500,522.500 198.500,510.500 193,423.500 201,423 232,422.500 252,413.500 264.500,405.500 275.500,395.500 298,362.500 313,339.500 316.500,340 319.500,409.500 321,477.500 315,530.500 303,625 299,662.500 296,689',
  '368.500,689 364.500,667.500 352.500,613.500 337.500,538.500 326.500,480.500 322.500,394.500 321,338.500 338,322.500 352.500,306.500 369,291.500 392.500,279.500 415.500,274 435,276.500 451.500,283.500 463.500,292.500 474.500,303.500 490.500,328.500 504.500,371.500 511.500,393.500 521.500,409.500 534.500,418.500 555.500,427.500 550.500,512.500 547.500,587.500 547,689',
  '586.500,689 586.500,666.500 584.500,621.500 580.500,500 578.500,412.500 577.500,315.500 600,315 628,310.500 636.500,306.500 642.500,301 645.500,297.500 647.500,289.500 715.500,306.500 723.500,308.500 713,350 695,401 687.500,426 684.500,443 684.500,481.500 686,515 690,595 687.500,653 687.500,689',
  '695.500,689 696.500,665.500 695.500,616 693,602 695,515 699,471.500 701.500,443.500 703.500,426 707,391.500 716.500,340 731.500,307.500 739.500,311.500 801.500,340.500 789.500,367.500 780.500,391.500 774.500,416.500 773,444.500 776.500,471.500 780.500,483.500 791,503 800,523 810,530 823,534 834,533.500 843,529.500 856,516 859.500,506.500',
  '769,689 768,617.500 765.500,560.500 765.500,522.500 769.500,488.500 777,489.500',
  '771,689 770,648 775,575.500 782.500,518.500 776.500,501.500',
  '868.500,689 869,645 870.500,605 866.500,565.500 861,520.500 856,507.500 866.500,507.500',
  '873.500,689 874,645 876,600 877,563.500 876,530.500 871.500,507.500',
  '866.500,507.500 868.500,497.500 871,485.500 872.500,472.500 866.500,444.500 861,431.500 840.500,389.500 827.500,363.500 822.500,356.500 884.500,321.500 892.500,318.500 910.500,378.500 929.500,433.500 950.500,475.500 959.500,505 970.500,537 970.500,551.500 965,591 959.500,620 965.500,671 966,689',
  '956.500,689 957,670.500 961,615 957,587 953.500,547.500 953.500,538.500 953,511 948,474 943,425 939.500,398.500 925,313 930.500,311.500 995.500,291.500 998.500,299.500 999.500,325.500 1002.500,338.500 1007.500,350.500 1019.500,366.500 1033.500,375.500 1052.500,378.500 1059.500,378.500 1059.500,689',
];

const EDGE_NODES = '562,171.5 577,169.5 624,179 690,193.5 703,194 710,194 723,194 730,194 743,193.5 808,179 856,169.5 870,171.5 587,259.5 625.5,253.5 699,259.5 707,259.5 725,259.5 733,259.5 807,253.5 846,259.5 1033.5,192.5 1090.5,228.5 1130,256 1139,267 980.5,232.5 1036.5,280.5 1059.5,312.5 395.5,287.5 447.5,291.5 496.5,374.5 515.5,415.5 541.5,512.5 538.5,587.5 327,408.5 345,537.5 360.5,611.5 605.500,323.500 631.500,318.500 649.500,307.500 594,621.500 705.500,349.500 698,391.500 702,403.500 691,471.500 693.500,480 686,540 693.500,540 680,601.500 678.500,652 782.500,364.500 768.500,473.500 775,518 773.500,560 776.500,617.500 760,648 777.500,679 794.500,529.500 848.500,536.500 876.500,501 874.500,441.500 847.500,386.500 902.500,380.500 938.500,476.500 952.500,508.500 958.500,474.500 961.500,512.500 962,551.500 957,591 965.700,591.500 951.500,618.500 970.500,613.500 948.500,655.500 991.500,326.500 1013.500,372.500 1030.500,383.500 868.500,530.500 864.700,601.500 880.500,612.500 861.500,645.500 883,645.500';
const BIG_NODES = '509.5,274.3 498,285.5 526.5,184.5 533,188.5 643,186.5 645.5,178.5 716.5,185.5 716.5,194.5 716.5,259.5 716.5,268.500 787.5,178.5 789.5,186.5 899.5,188.5 906.5,184.5 923.5,274.5 935,285.5 1014.5,174.5 1020,168.5 956.5,220.5 961.5,226.5 967.5,220.5 1071.5,221.5 1075.5,213.5 1147.5,299.5 1155.5,301.5 1104.5,377.5 1104.5,393.5 416.5,282.5 415.5,274.5 546.5,432.5 555.5,427.5 325.5,351 313,339.5 321.5,339 324.500,338.500 193,423.5 201,423.5 232,422.5 577.5,315.5 586.5,323.5 654.5,299.5 647.5,289.5 645.500,297.500 713.5,315.5 715.5,306.5 723.5,308.5 731.5,307.5 739.5,311.5 735.5,318.5 790.5,344.5 801.5,340.5 578.5,412.5 586.5,412.5 687.5,426 695.5,426 703.5,426.5 684.5,442.5 693,443.5 701.5,443.5 586.500,666.500 595.500,666.500 679.5,666.5 687.5,666.5 696.5,665.5 704.5,665.5 769.5,488.5 777,489.5 789.5,485.5 780.500,483.500 777.500,500.500 775.500,503.500 823,534.5 822.5,543.5 866,518.5 856.5,507.5 863.5,508 871.5,506.5 885.5,329.5 892.5,318.5 884.5,321.5 833.5,359.5 827.5,363.5 822.5,356.5 932.5,320.5 930.5,311.5 922.5,313.5 989.5,302.5 995.5,291.5 998.5,299.5 1051.5,387.5 1051.500,378.500 1059.5,378.5 953.5,538.5 961.5,537.5 970.5,536.5 759.500,666.500 769.500,668.500 778.500,669.500 860.500,669.500 868.500,669.500 873.500,669.500 883.500,669.500 948.500,670.500 956.500,670.500 965.500,671.500 973.500,671.500';
const WHITE_NODES = '216.5,432.5 256.5,421.5 281.5,400.5 288.5,392.5 306.5,367.5 314.5,394.5 313.5,476.5 307.5,529.5 291.5,661.5 207.5,509.5 207.5,522.5 209.5,575.5 210.5,663.5';
const pts = s => s.split(' ').map(q => q.split(',').map(Number));

const TICKS = [
  'M416.500 282.500v8m-3.500 .5h7', 'M643 187l-2 7m-3.500-1l7 2', 'M790 187l2 7m-3 2l6-2', 'M1071.500 222l-4 7m-3-2l6 3',
  'M483 332l-7 3m-1-3l2 6', 'M345 328l7 5m-3 3l4-5', 'M335 479.500h9m0-3v6', 'M541 512.500h-8m0-3v7', 'M587 412.500h9m0-4v8', 'M595 666.500h9m0-3v6',
  'M679 666.500h-9m0-3v6', 'M705 665.500h9m0-3v6', 'M766 415.500h-8m0-4v7', 'M822.500 543v8m-4 .5h7', 'M871 425.500h7m-1-4v6', 'M372 665l9-2m-1-3v6',
  'M759 667.500h-8m0-3v6', 'M779 669.500h8m0-3v6', 'M860 669.500h-9m0-3v6', 'M883 669.500h9m0-3v6', 'M948 671.500h-8m0-3v6', 'M973 671.500h9m0-3v6', 'M684 426.500h20M684 443.500h18M953 537.500h18',
];
const WHITE_TICKS = ['M313 476.500h-8m0-4v7', 'M208 509.500h8m0-3v7', 'M291 661l-8-1m0-3v6', 'M233 431l2 8m-3 0l6 0', 'M282 401l6 5m-3 3l4-6', 'M289 393l6 5m-2 3l4-6'];

/* x, baseline, text, optional mask rectangle [x, y, w, h] */
const LABELS = [
  [511, 183, "'118'"], [499, 238, '12.43', [499, 228, 27, 13]], [487, 269, "'118'"], [594, 269, '26.14'], [641, 181, "'119'"], [670, 188, '8.43'], [716, 188, "0'"], [705, 271, "'0',0"],
  [573, 167, '13.16'], [830, 167, '13.16'], [743, 181, "'119',119"], [742, 188, '8.43'], [899, 183, "'118',118"], [908, 238, '12.43', [907, 228, 7, 13]], [813, 269, '26.14'], [877, 286, "'118',118"],
  [975, 195, '9.74', [975, 186, 22, 12]], [944, 214, "'0',0"], [1017, 168, "'0',0"], [1036, 196, '8.43', [1035, 187, 6, 12]], [1071, 216, "'120',120"], [1117, 249, '15.16', [1116, 239, 25, 13]], [1028, 305, '26.14', [1029, 296, 27, 13]], [1147, 311, "'121',121"], [1118, 351, '12.43', [1116, 341, 26, 13]],
  [354, 300, '13.6', [354, 292, 22, 10]], [279, 345, "'118',118"], [415, 278, "'117',117"], [481, 346, '26.38', [480, 336, 27, 13]], [548, 444, "'116',116"], [534, 610, '42.36', [533, 600, 27, 13]],
  [267, 393, '14.09', [267, 383, 27, 13]], [192, 427, "'118'"], [207, 427, '3.69'], [189, 609, '42.85', [189, 599, 27, 13]], [298, 573, '54.53', [297, 563, 27, 13]], [331, 576, '55.59', [332, 566, 27, 13]],
  [565, 367, '11.41', [565, 357, 27, 13]], [540, 407, "'115',115"], [586, 318, "'115',115"], [603, 317, '8.69'], [654, 294, "'114',114"], [671, 302, '8.26'], [718, 311, '1'], [736, 313, "111',111"], [715, 327, "'113',113"], [761, 329, '8.12', [759, 320, 22, 11]],
  [569, 543, '30.03', [570, 533, 27, 13]], [573, 678, "'0',0"], [649, 422, "'110',110"], [677, 438, '2.03', [675, 428, 39, 14]], [691, 438, '2.03'], [647, 437, "'110',110"], [696, 437, "'110',110"], [694, 455, "'110',110"],
  [693, 368, '1', [692, 359, 12, 13]], [699, 371, '14.15', [697, 361, 29, 13]], [679, 558, '28.26', [675, 548, 32, 13]], [681, 661, "'110',110"], [658, 677, "'110',110"],
  [732, 664, "'108',108"], [768, 661, "'109'"], [791, 353, "'105',105"], [793, 356, "112',112"], [763, 413, '17.66', [762, 404, 27, 13]], [843, 342, '8.33', [843, 333, 22, 12]], [849, 436, '18.19', [849, 426, 27, 13]],
  [886, 314, "'102',102"], [886, 323, "'104',104"], [953, 304, '8.03'], [990, 297, "'101',101"], [998, 355, '12.6', [997, 345, 20, 13]], [1058, 388, "'121',121"], [1053, 398, "100',100"], [914, 432, '27.35', [914, 422, 28, 13]], [944, 429, '73', [944, 419, 13, 13]],
  [776, 498, "'108',108"], [780, 512, "'109'"], [785, 521, '7.93', [784, 511, 8, 12]], [799, 537, "'0',0"], [836, 530, '5.93', [850, 521, 8, 12]], [821, 514, "'106',106"], [868, 513, "07',107"],
  [915, 532, "'103',103"], [962, 532, "'103',103"], [944, 545, '1.05', [942, 536, 23, 13]], [856, 591, '119.24', [855, 581, 34, 14]], [950, 607, '15.88', [947, 597, 31, 17]], [752, 582, '2', [752, 572, 18, 13]], [762, 579, '21.47', [760, 569, 29, 13]],
  [1045, 658, '14.93', [1045, 648, 8, 13]], [949, 665, "'103',103"], [927, 682, "'103',103"], [862, 665, "'107',107"], [837, 682, "'106',106"],
];

/* baseline x, start y, text, size, length, white */
const NAMES = [
  [245, 642, 'Under Sleeve', 12.5, 74, 1], [257, 614, '42', 12.5, 14, 1], [269, 630.5, 'MATERIAL', 12.5, 59, 1],
  [418, 579, 'Top Sleeve', 16, 81], [433, 549, '42', 16, 17], [448.500, 572, 'MATERIAL', 16, 81],
  [628, 665, 'Center Back', 20, 109], [646.5, 624, '42', 20, 22], [665, 651, 'MATERIAL', 20, 96],
  [712, 664, 'Side Back', 20, 86], [730.5, 632, '42', 20, 22], [748, 660, 'MATERIAL', 20, 96],
  [797, 713, 'Back', 15, 36],
  [878, 686, 'Side Front', 19, 83], [895.5, 650, '42', 19, 20], [912, 678, 'MATERIAL', 19, 88],
  [1019, 658, 'Front', 20, 45], [1037, 642, '42', 20, 22], [1055, 677, 'MATERIAL', 20, 96],
  [714, 230, 'Top Collar', 5, 20], [716, 226, '42', 5, 6], [718.500, 232, 'MATERIAL', 5, 21],
  [1056, 265, 'Under Collar', 5, 20], [1058.500, 262, '42', 5, 6], [1061, 266, 'MATERIAL', 5, 20],
];

const Mark = ({ x, y, fill }) => <rect x={Math.floor(x) - 1} y={Math.floor(y) - 1} width="3" height="3" fill={fill} />;

function PatternCanvas() {
  return (
    <Canvas viewBox="25 165 1299 524" fontFamily="Liberation Sans, Arial, sans-serif">
      {PIECES.map(d => <path key={d} d={d} fill="#0000ff" stroke={M} strokeWidth="1.300" />)}
      <path d={SLEEVE} fill="#0000ff" stroke="#fff" strokeWidth="1.400" />
      {LABELS.filter(l => l[3]).map(([x, y, , m]) => <rect key={`${x},${y}`} x={m[0]} y={m[1]} width={m[2]} height={m[3]} fill="#c0c0c0" />)}
      {SEAMS.map(s => (
        <g key={s}>
          <polyline points={s} fill="none" stroke={M} strokeWidth="1" strokeDasharray="4 3" />
          {pts(s).filter(([, y]) => y < 688).map(([x, y], i) => <Mark key={i} x={x} y={y} fill={M} />)}
        </g>
      ))}
      <path d="M258.500 689V495l-9 22" fill="none" stroke="#fff" />
      <path d="M436.500 689V388l-9 22M445 675l-7 14M649.500 689V432l-8 20M734.500 689V442l-9 22M812.500 689V618l-8 22M898.500 689V480l-9 22M1041.500 689V451l-9 22M716.500 199v56M715 213l1.500-5M1057.500 232v59l2-7M1055.500 239l2-7" fill="none" stroke={M} />
      {TICKS.map(d => <path key={d} d={d} fill="none" stroke={M} />)}
      {WHITE_TICKS.map(d => <path key={d} d={d} fill="none" stroke="#fff" />)}
      {pts(EDGE_NODES).map(([x, y], i) => <Mark key={i} x={x} y={y} fill={M} />)}
      {pts(BIG_NODES).map(([x, y], i) => <circle key={i} cx={x} cy={y} r="2.600" fill={M} />)}
      {pts(WHITE_NODES).map(([x, y], i) => <Mark key={i} x={x} y={y} fill="#fff" />)}
      {pts('202.5,431.5 233.5,430.5 313.5,355.5').map(([x, y], i) => <circle key={i} cx={x} cy={y} r="2.600" fill="#fff" />)}
      <g fontSize="10" letterSpacing="0.350" fill={M}>
        {LABELS.map(([x, y, t], i) => <text key={i} x={x} y={y}>{t}</text>)}
        <g fill="#fff">
          <text x="313" y="350">'116',116</text>
          <text x="202" y="426">'118',118</text>
          <text x="213" y="425">'0',0</text>
        </g>
      </g>
      {NAMES.map(([x, y, t, size, len, white], i) => (
        <text key={i} transform={`translate(${x} ${y}) rotate(-90)`} fontSize={size} textLength={len} fill={white ? '#fff' : M}>{t}</text>
      ))}
      <g fill="none" shapeRendering="crispEdges">
        <path d="M142.500 319.500V689M142.500 319.500H360M373.500 670v19" stroke="#000" strokeDasharray="4 3" />
        <path d="M360 319.500h13.500M373.500 319.500V670" stroke="#b8b070" strokeDasharray="4 3" />
      </g>
      {[[142.5, 319.5], [257.5, 319.5], [142.5, 590.5]].map(([x, y]) => (
        <g key={`${x}${y}`} shapeRendering="crispEdges">
          <rect x={x - 2.5} y={y - 2.5} width="5" height="5" fill="#404040" />
          <path d={`M${x - 1.5} ${y}h3`} stroke="#c0c0c0" />
        </g>
      ))}
      <rect x="371" y="317" width="5" height="5" fill="#ff0" />
      <rect x="371" y="588" width="5" height="5" fill="#ff0" />
    </Canvas>
  );
}

const MENUS = [['A', 'rchivo', 57], ['E', 'ditar', 46], ['P', 'ieza', 43], ['', 'Escalado', 62], ['', 'Diseño', 51.5], ['3', 'D', 30.5], ['', 'Herramientas', 87], ['V', 'ista', 41], ['', 'Ayuda', 50]];

function Tab({ h, right, children }) {
  return <SideTab $h={h} $right={right}><SideTabFace>{children}</SideTabFace></SideTab>;
}

export default function App() {
  return (
    <Desktop>
      <Global />
      <svg width="0" height="0" style={{ position: 'absolute' }}>
        <defs>
          <linearGradient id="shapeFill" x1="0" y1="0" x2="1" y2="1">
            <stop offset="0" stopColor="#fff" /><stop offset="1" stopColor="#b4dcf8" />
          </linearGradient>
          <clipPath id="sheetClip"><path d="M3.500 1.500h5l2 2 4 4v9h-11z" /></clipPath>
        </defs>
      </svg>
      <TitleBar>
        <Blob $x={22} $y={2} $w={284} $h={18} $c="#c6c6c6" $b={5} $r={9} />
        <Blob $x={35} $y={17} $w={30} $c="#a87878" />
        <Blob $x={128} $y={16} $w={40} $c="#7b90bd" />
        <Blob $x={170} $y={-5} $w={90} $h={7} $c="#555" $b={4} />
        <Blob $x={320} $y={9} $w={36} $c="#3f77b8" />
        <Blob $x={422} $y={12} $w={26} $c="#b9cbd0" $b={4} />
        <Blob $x={470} $y={-8} $w={90} $h={15} $c="#426ba2" $b={6} $r={9} />
        <Blob $x={612} $w={26} $c="#b3ccd0" />
        <Blob $x={625} $y={13} $w={14} $c="#4c6f83" />
        <Blob $x={709} $w={24} $c="#b3ccd4" $r={9} />
        <Blob $x={802} $y={6} $w={46} $c="#8c96ad" />
        <Blob $x={812} $y={12} $w={12} $c="#c06c54" />
        <Blob $x={826} $y={13} $w={12} $c="#3c8a4e" />
        <Blob $x={862} $y={-2} $w={20} $h={28} $c="#8c8aa4" $r={8} $b={4} />
        <Blob $x={880} $y={2} $w={14} $c="#5276a8" $b={4} />
        <Blob $x={905} $y={11} $w={32} $c="#b4b273" $r={8} />
        <Blob $x={945} $y={6} $w={20} $c="#8b7888" $b={4} />
        <Blob $x={968} $y={-2} $w={6} $h={24} $c="#816d82" $b={2} />
        <Blob $x={1008} $y={-4} $w={7} $h={26} $c="#816d82" $b={2} />
        {[1043, 1064, 1084, 1105, 1126, 1148].map(x => <Blob key={x} $x={x} $y={12} $w={12} $h={10} $c="#756f80" $b={2.5} />)}
        <TitleEdge />
        <AppIcon>
          <svg width="16" height="16" viewBox="0 0 18 18">
            <circle cx="9" cy="9" r="8.500" fill="#f4d792" stroke="#3a1e14" />
            <path d="M2 10a7 7 0 0 0 14 0z" fill="#4c1a50" />
            <path d="M5 2l6 10M13 2L7 12" stroke="#1c1c24" strokeWidth="2.600" />
            <path d="M5 2l6 10M13 2L7 12" stroke="#fff" strokeWidth="1" />
            <circle cx="6" cy="13.500" r="2" fill="none" stroke="#d9a0d0" strokeWidth="1.300" />
            <circle cx="12" cy="13.500" r="2" fill="none" stroke="#d9a0d0" strokeWidth="1.300" />
          </svg>
        </AppIcon>
        <TitleText>OptiTex PDS 10 - Basic jacket for woman base 42.dsn</TitleText>
        <WindowButtons>
          <WindowButton $w={28} $first>
            <svg width="14" height="12"><rect x="1.500" y="6.500" width="11" height="4" fill="#fff" stroke="#555" /></svg>
          </WindowButton>
          <WindowButton $w={27}>
            <svg width="12" height="12"><path d="M4 2h6v6H8M2 4h6v6H2z" fill="none" stroke="#444" strokeWidth="3.200" /><path d="M4 2h6v6H8M2 4h6v6H2z" fill="none" stroke="#fff" strokeWidth="1.600" /></svg>
          </WindowButton>
          <WindowButton $w={47} $close>
            <svg width="13" height="11"><path d="M3 2l7 7M10 2L3 9" stroke="#544" strokeWidth="4" /><path d="M3 2l7 7M10 2L3 9" stroke="#fff" strokeWidth="2.400" /></svg>
          </WindowButton>
        </WindowButtons>
      </TitleBar>
      <Frame>
        <Body>
          <MenuBar>
            <Grip />
            <MenuItem $w={6} />
            {MENUS.map(([u, rest, w]) => <MenuItem key={rest} $w={w}>{u && <u>{u}</u>}{rest}</MenuItem>)}
          </MenuBar>
          <Toolbars>
            {ROWS.map(([pad, spec]) => <Toolbar key={spec} pad={pad} spec={spec} />)}
          </Toolbars>
          <Work>
            <SideTabs $w={23} $top={4} $left={1}>
              <Tab h={120}>Propiedades 3D</Tab>
              <Tab h={134}>Caja herramientas</Tab>
              <Tab h={187}>Vista  &amp; Selección Atributos</Tab>
              <Tab h={110}>Tabla</Tab>
            </SideTabs>
            <Center>
              <PatternCanvas />
              <HScroll>
                <ArrowSvg width="4" height="7"><path d="M4 0v7L0 3.500z" fill="#333" /></ArrowSvg>
                <Thumb $flat $m="0 0 0 719px" />
                <ArrowSvg $m="0 0 0 auto" width="4" height="7"><path d="M0 0v7l4-3.500z" fill="#333" /></ArrowSvg>
              </HScroll>
            </Center>
            <VScroll>
              <Thumb><svg width="7" height="4"><path d="M0 4h7L3.500 0z" fill="#333" /></svg></Thumb>
              <Thumb $m="176px 0 0" />
              <Thumb $m="auto 0 0"><svg width="7" height="4"><path d="M0 0h7L3.500 4z" fill="#333" /></svg></Thumb>
            </VScroll>
            <SideTabs $w={22} $top={5} $left={4}>
              <Tab h={94} right>Sombreado</Tab>
              <Tab h={91} right>Maniqui 3D</Tab>
            </SideTabs>
          </Work>
          <Status>
            <Pane $w={1137}>Listo</Pane>
            <Pane $w={59}>COSER</Pane>
            <Pane $w={106}></Pane>
            <Pane $w={54}>CM</Pane>
          </Status>
        </Body>
      </Frame>
      <Below />
    </Desktop>
  );
}
